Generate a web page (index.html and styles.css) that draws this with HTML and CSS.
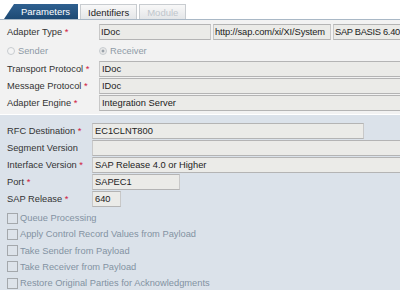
FILE: index.html
```html
<!DOCTYPE html>
<html lang="en">
<head>
    <meta charset="UTF-8">
    <title>Adapter Parameters</title>
    <link rel="stylesheet" href="styles.css">
</head>
<body>
    <div class="tabs">
        <div class="tab active">Parameters</div>
        <div class="tab">Identifiers</div>
        <div class="tab disabled">Module</div>
    </div>
    <div class="upper">
        <div class="row">
            <label>Adapter Type <span class="req">*</span></label>
            <div class="multi">
                <div class="field type">IDoc</div>
                <div class="field ns">http://sap.com/xi/XI/System</div>
                <div class="field swc">SAP BASIS 6.40</div>
            </div>
        </div>
        <div class="row radios">
            <span class="radio"><i class="dot"></i>Sender</span>
            <span class="radio"><i class="dot on"></i>Receiver</span>
        </div>
        <div class="row">
            <label>Transport Protocol <span class="req">*</span></label>
            <div class="field">IDoc</div>
        </div>
        <div class="row">
            <label>Message Protocol <span class="req">*</span></label>
            <div class="field">IDoc</div>
        </div>
        <div class="row">
            <label>Adapter Engine <span class="req">*</span></label>
            <div class="field">Integration Server</div>
        </div>
    </div>
    <div class="lower">
        <div class="row">
            <label>RFC Destination <span class="req">*</span></label>
            <div class="field rfc">EC1CLNT800</div>
        </div>
        <div class="row">
            <label>Segment Version</label>
            <div class="field"></div>
        </div>
        <div class="row">
            <label>Interface Version <span class="req">*</span></label>
            <div class="field">SAP Release 4.0 or Higher</div>
        </div>
        <div class="row">
            <label>Port <span class="req">*</span></label>
            <div class="field port">SAPEC1</div>
        </div>
        <div class="row">
            <label>SAP Release <span class="req">*</span></label>
            <div class="field rel">640</div>
        </div>
        <ul class="checks">
            <li><i class="box"></i>Queue Processing</li>
            <li><i class="box"></i>Apply Control Record Values from Payload</li>
            <li><i class="box"></i>Take Sender from Payload</li>
            <li><i class="box"></i>Take Receiver from Payload</li>
            <li><i class="box"></i>Restore Original Parties for Acknowledgments</li>
        </ul>
    </div>
</body>
</html>
```

FILE: styles.css
```css
* { margin: 0; padding: 0; box-sizing: border-box; }
body {
    font-family: "Liberation Sans", Arial, sans-serif;
    font-size: 9.3px;
    color: #333;
    background: #dbe2ea;
    width: 400px;
    height: 290px;
    overflow: hidden;
}
.tabs {
    display: flex;
    align-items: flex-end;
    height: 20px;
    padding: 4px 0 0 4px;
    gap: 2px;
    background: #fff;
    border-bottom: 1px solid #a9b8c6;
}
.tab {
    height: 15px;
    line-height: 15px;
    padding: 0 7px;
    font-size: 9.5px;
    color: #222;
    background: linear-gradient(#f8f8f8, #e4e6e8);
    border: 1px solid #c8ccd0;
    border-bottom: none;
}
.tab.active {
    width: 74px;
    padding-left: 17px;
    color: #fff;
    border: none;
    background: linear-gradient(#2f6090, #1d4a74);
    clip-path: polygon(10px 0, 100% 0, 100% 100%, 0 100%);
}
.tab.disabled { color: #c0c6cc; }
.upper {
    background: #f2f2f2;
    padding: 4px 0 2px 7px;
    border-bottom: 1px solid #fff;
}
.row {
    display: grid;
    grid-template-columns: 92px 1fr;
    align-items: center;
    height: 16px;
    margin-bottom: 1px;
}
.upper .row.radios {
    height: 19px;
    display: flex;
    color: #8e9aa6;
}
.radio { display: flex; align-items: center; }
.radio:first-child { width: 92px; }
.dot {
    width: 8px;
    height: 8px;
    margin-right: 3px;
    border-radius: 50%;
    border: 1px solid #c8ccd0;
    background: #f4f4f4;
}
.dot.on { background: radial-gradient(#9aa2aa 30%, #e8e8e8 40%); }
.req { color: #d02040; }
.field {
    height: 16px;
    line-height: 14px;
    padding-left: 2px;
    background: #ebebe8;
    border: 1px solid #b4b4b4;
    border-left-color: #c8c8c8;
    border-right: none;
    color: #222;
    white-space: nowrap;
    overflow: hidden;
}
.multi { display: flex; gap: 2px; }
.multi .field { border-right: 1px solid #c8c8c8; padding-left: 1px; }
.field.type { width: 112px; }
.field.ns { width: 118px; letter-spacing: -0.1px; }
.field.swc { flex: 1; border-right: none; letter-spacing: -0.3px; }
.lower { padding: 8px 0 0 7px; }
.lower .row { grid-template-columns: 85px 1fr; }
.field.rfc { width: 272px; border-right: 1px solid #c8c8c8; }
.field.port { width: 88px; border-right: 1px solid #c8c8c8; }
.field.rel { width: 29px; border-right: 1px solid #c8c8c8; }
.checks { list-style: none; margin-top: 3px; color: #8392a2; }
.checks li {
    display: flex;
    align-items: center;
    height: 16.25px;
}
.box {
    width: 11px;
    height: 11px;
    margin-right: 2px;
    border: 1px solid #a4a8ac;
    background: #dde3ea;
}
```
